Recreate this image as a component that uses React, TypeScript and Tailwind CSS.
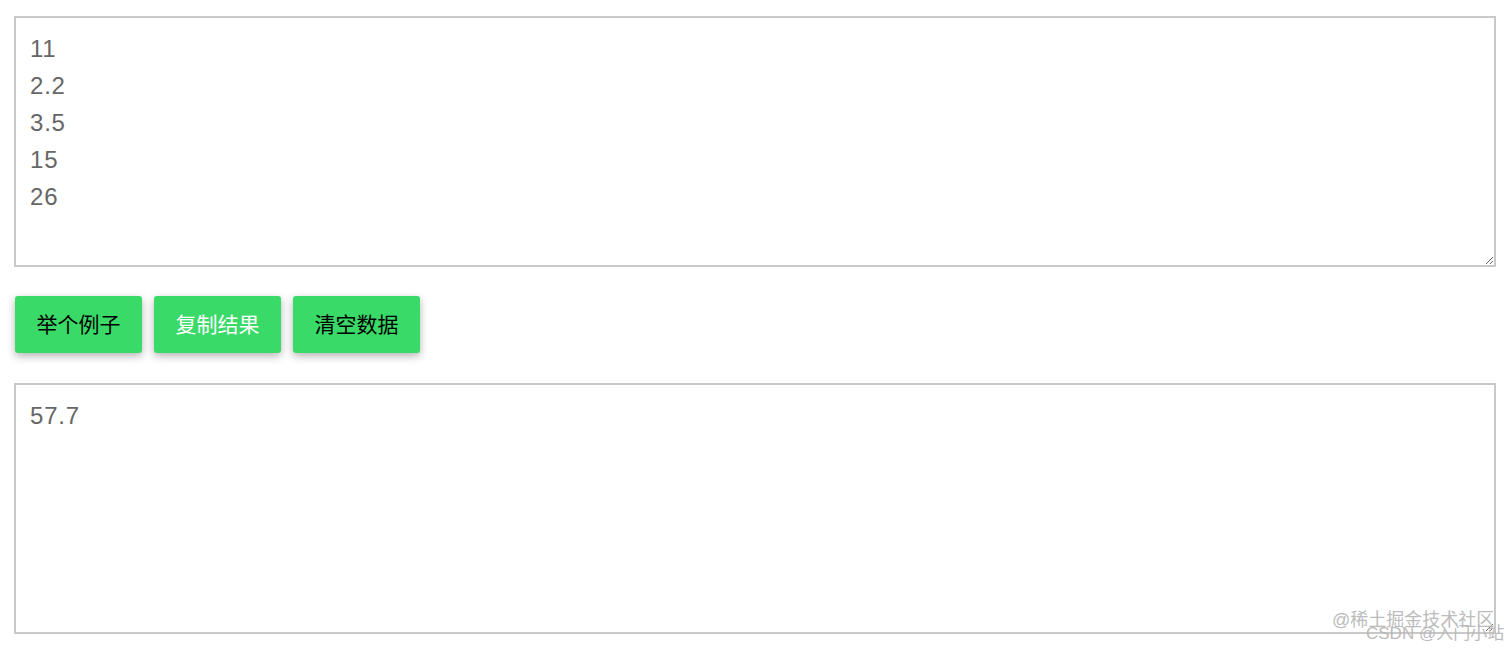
import React from "react";

const font = { fontFamily: '"Liberation Sans", "Noto Sans CJK SC", sans-serif' };

export default function App() {
  return (
    <div className="relative w-[1512px] h-[650px] bg-white overflow-hidden" style={font}>
      <div className="pt-[16px] pl-[14px] pr-[16px] flex flex-col">
        <textarea
          className="block w-full h-[251px] border-2 border-[#c9c9c9] bg-white pt-[12px] px-[14px] text-[24px] tracking-[0.8px] leading-[37px] text-[#666] outline-none resize-y"
          style={font}
          defaultValue={"11\n2.2\n3.5\n15\n26"}
        />
        <div className="flex gap-[12px] mt-[29px] pl-[1px]">
          <button className="w-[127px] h-[57px] rounded-[3px] bg-[#39da68] text-black text-[21px] shadow-[0_3px_8px_rgba(0,0,0,0.3)]">举个例子</button>
          <button className="w-[127px] h-[57px] rounded-[3px] bg-[#39da68] text-white text-[21px] shadow-[0_3px_8px_rgba(0,0,0,0.3)]">复制结果</button>
          <button className="w-[127px] h-[57px] rounded-[3px] bg-[#39da68] text-black text-[21px] shadow-[0_3px_8px_rgba(0,0,0,0.3)]">清空数据</button>
        </div>
        <textarea
          className="block w-full h-[251px] mt-[30px] border-2 border-[#c9c9c9] bg-white pt-[12px] px-[14px] text-[24px] tracking-[0.8px] leading-[37px] text-[#666] outline-none resize-y"
          style={font}
          defaultValue={"57.7"}
        />
      </div>
      <div className="absolute left-[1332px] top-[609px] text-[18px] leading-[22px] text-[#b5b5b5] opacity-90 pointer-events-none whitespace-nowrap">@稀土掘金技术社区</div>
      <div className="absolute left-[1366px] top-[623px] text-[17px] leading-[22px] text-[#b5b5b5] opacity-90 pointer-events-none whitespace-nowrap">CSDN @入门小站</div>
    </div>
  );
}
